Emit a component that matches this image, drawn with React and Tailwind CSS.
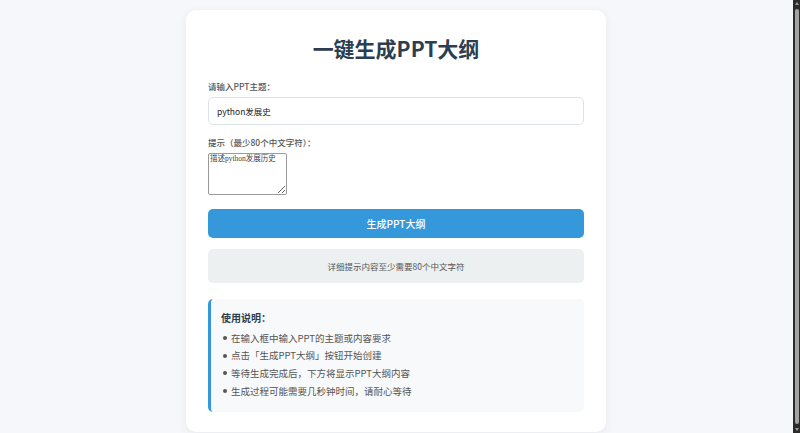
import { useState } from 'react';

const tips = [
  '在输入框中输入PPT的主题或内容要求',
  '点击「生成PPT大纲」按钮开始创建',
  '等待生成完成后，下方将显示PPT大纲内容',
  '生成过程可能需要几秒钟时间，请耐心等待',
];

function App() {
  const [topic, setTopic] = useState('python发展史');
  const [hint, setHint] = useState('描述python发展历史');

  return (
    <div className="h-screen overflow-hidden bg-[#f5f7fa] pt-[10px] pr-[8px] font-['Noto_Sans_CJK_SC',sans-serif]">
      <div className="w-[420px] mx-auto bg-white rounded-[10px] shadow-[0_2px_10px_rgba(0,0,0,0.06)] px-[22px] pt-[22px] pb-[20px]">

        {/* Header */}
        <h1 className="text-[21px] leading-[32px] font-bold text-[#2c3e50] text-center mb-[16px]">
          一键生成PPT大纲
        </h1>

        {/* Form */}
        <label className="block text-[8.5px] leading-[13px] font-medium text-[#555] mb-[3px]">
          请输入PPT主题：
        </label>
        <input
          className="w-full h-[28px] border border-[#dde3ea] rounded-[5px] px-[8px] text-[8.5px] text-[#222] outline-none"
          value={topic}
          onChange={(e) => setTopic(e.target.value)}
        />

        <label className="block text-[8.5px] leading-[13px] font-medium text-[#555] mt-[11px] mb-[4px]">
          提示（最少80个中文字符）：
        </label>
        <textarea
          className="block w-[79px] h-[42px] border border-[#9a9a9a] rounded-[2px] px-[1px] py-0 text-[7.5px] leading-[10px] text-[#444] font-['Liberation_Serif','Noto_Sans_CJK_SC',serif]"
          value={hint}
          onChange={(e) => setHint(e.target.value)}
        />

        <button className="w-full h-[29px] mt-[14px] bg-[#3498db] rounded-[5px] text-white text-[10px] font-medium">
          生成PPT大纲
        </button>

        <div className="mt-[11px] h-[34px] bg-[#ecf0f1] rounded-[5px] flex items-center justify-center text-[8.5px] text-[#555]">
          详细提示内容至少需要80个中文字符
        </div>

        {/* Instrucoes */}
        <div className="mt-[16px] bg-[#f8f9fa] border-l-[3px] border-[#3498db] rounded-[5px] pl-[10px] pr-[10px] pt-[11px] pb-[12px]">
          <h3 className="text-[10px] leading-[15px] font-bold text-[#2c3e50] mb-[4px]">使用说明：</h3>
          <ul className="flex flex-col">
            {tips.map((t) => (
              <li key={t} className="flex items-center gap-[4px] h-[17.7px] pl-[2px] text-[9.5px] text-[#555]">
                <span className="w-[4px] h-[4px] rounded-full bg-[#555] shrink-0" />
                {t}
              </li>
            ))}
          </ul>
        </div>
      </div>

      {/* barra de rolagem */}
      <div className="fixed top-0 right-0 z-10 w-[7px] h-[433px] bg-[#2b2b2b]">
        <div className="absolute top-[2px] left-[2px] w-0 h-0 border-l-[2px] border-r-[2px] border-b-[3px] border-l-transparent border-r-transparent border-b-[#9a9a9a]" />
        <div className="absolute top-[9px] bottom-[9px] left-[2px] right-[1px] rounded-[2px] bg-[#a3a3a3]" />
        <div className="absolute bottom-[2px] left-[2px] w-0 h-0 border-l-[2px] border-r-[2px] border-t-[3px] border-l-transparent border-r-transparent border-t-[#9a9a9a]" />
      </div>
    </div>
  );
}

export default App;
